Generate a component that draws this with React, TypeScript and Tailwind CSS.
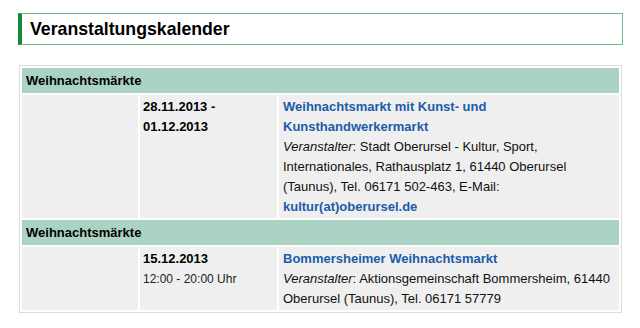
import React from 'react';

interface EventItem {
  id: string;
  category: string;
  date: string;
  dateEnd?: string;
  time?: string;
  title: string;
  organizer: string;
  email?: string;
}

const events: EventItem[] = [
  {
    id: '1',
    category: 'Weihnachtsmärkte',
    date: '28.11.2013 -',
    dateEnd: '01.12.2013',
    title: 'Weihnachtsmarkt mit Kunst- und Kunsthandwerkermarkt',
    organizer:
      'Stadt Oberursel - Kultur, Sport, Internationales, Rathausplatz 1, 61440 Oberursel (Taunus), Tel. 06171 502-463, E-Mail:',
    email: 'kultur(at)oberursel.de',
  },
  {
    id: '2',
    category: 'Weihnachtsmärkte',
    date: '15.12.2013',
    time: '12:00 - 20:00 Uhr',
    title: 'Bommersheimer Weihnachtsmarkt',
    organizer: 'Aktionsgemeinschaft Bommersheim, 61440 Oberursel (Taunus), Tel. 06171 57779',
  },
];

export default function App() {
  return (
    <div className="w-[640px] h-[328px] bg-white pt-[13px] pl-[18px] font-['Liberation_Sans',Arial,sans-serif] text-[13px] text-[#111]">
      {/* Page title */}
      <div className="w-[605px] h-[32px] flex items-center border border-[#6cbb86] border-l-4 border-l-[#128a3a] pl-[8px]">
        <h1 className="text-[17.7px] font-bold text-black">Veranstaltungskalender</h1>
      </div>

      {/* Calendar table */}
      <div className="mt-[20px] ml-[1px] w-[603px] border border-[#dcdcdc] p-[2px] grid grid-cols-[116px_137px_1fr] gap-[2px]">
        {events.map((ev) => (
          <React.Fragment key={ev.id}>
            <div className="col-span-3 h-[25px] bg-[#abd3c3] px-[4px] flex items-center font-bold text-black">
              {ev.category}
            </div>
            <div className="bg-[#efefef]" />
            <div className="bg-[#efefef] pl-[3px] pt-[2px] pb-[2px] leading-[20px]">
              <div className="font-bold text-black">{ev.date}</div>
              {ev.dateEnd && <div className="font-bold text-black">{ev.dateEnd}</div>}
              {ev.time && <div className="text-[12px] text-[#222]">{ev.time}</div>}
            </div>
            <div className="bg-[#efefef] pl-[4px] pr-[4px] pt-[2px] pb-[1px] leading-[20px]">
              <a className="block font-bold text-[#1c5ca8]">{ev.title}</a>
              <div>
                <i>Veranstalter</i>: {ev.organizer}
              </div>
              {ev.email && <a className="block font-bold text-[#1c5ca8]">{ev.email}</a>}
            </div>
          </React.Fragment>
        ))}
      </div>
    </div>
  );
}
